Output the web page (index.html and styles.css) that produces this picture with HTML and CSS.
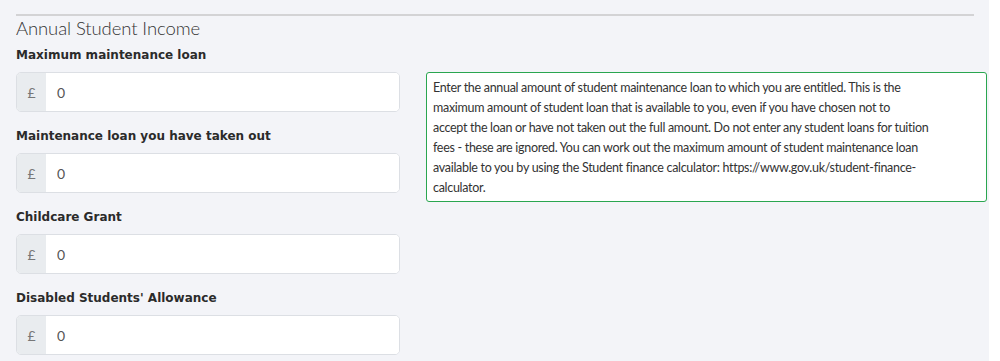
FILE: index.html
```html
<!DOCTYPE html>
<html lang="en">
<head>
    <meta charset="UTF-8">
    <meta name="viewport" content="width=device-width, initial-scale=1.0">
    <title>Annual Student Income</title>
    <link rel="stylesheet" href="styles.css">
</head>
<body>
    <div class="panel">
        <hr class="divider">
        <h3>Annual Student Income</h3>

        <div class="row">
            <div class="fields">
                <div class="field">
                    <label for="maxLoan">Maximum maintenance loan</label>
                    <div class="input-group">
                        <span class="prefix">£</span>
                        <input type="text" id="maxLoan" value="0">
                    </div>
                </div>
                <div class="field">
                    <label for="takenLoan">Maintenance loan you have taken out</label>
                    <div class="input-group">
                        <span class="prefix">£</span>
                        <input type="text" id="takenLoan" value="0">
                    </div>
                </div>
                <div class="field">
                    <label for="childcare">Childcare Grant</label>
                    <div class="input-group">
                        <span class="prefix">£</span>
                        <input type="text" id="childcare" value="0">
                    </div>
                </div>
                <div class="field">
                    <label for="dsa">Disabled Students' Allowance</label>
                    <div class="input-group">
                        <span class="prefix">£</span>
                        <input type="text" id="dsa" value="0">
                    </div>
                </div>
            </div>

            <div class="help">
                <p>Enter the annual amount of student maintenance loan to which you are entitled. This is the maximum amount of student loan that is available to you, even if you have chosen not to<br>accept the loan or have not taken out the full amount. Do not enter any student loans for tuition fees - these are ignored. You can work out the maximum amount of student maintenance loan available to you by using the Student finance calculator: https://www.gov.uk/student-finance-calculator.</p>
            </div>
        </div>
    </div>
</body>
</html>
```

FILE: styles.css
```css
body {
    margin: 0;
    background: #fff;
    font-family: Lato, "Open Sans", sans-serif;
    color: #333;
}

.panel {
    width: 989px;
    height: 361px;
    box-sizing: border-box;
    padding: 14px 2px 0 16px;
    background-color: #f3f4f8;
}

.divider {
    margin: 0 13px 0 0;
    border: none;
    border-top: 2px solid #d3d3d5;
}

h3 {
    margin: 0 0 5px 0;
    font-size: 18.5px;
    font-weight: 300;
    line-height: 24px;
    letter-spacing: -0.1px;
    color: #333;
}

.row {
    display: flex;
    gap: 26px;
    align-items: flex-start;
}

.fields {
    width: 384px;
}

.field {
    margin-bottom: 14px;
}

.field label {
    display: block;
    margin-bottom: 7px;
    font-family: "DejaVu Sans", sans-serif;
    font-size: 12px;
    font-weight: bold;
    line-height: 20px;
    color: #2b2b2b;
}

.input-group {
    display: flex;
    height: 40px;
    box-sizing: border-box;
    border: 1px solid #dcdfe4;
    border-radius: 5px;
    overflow: hidden;
    background: #fff;
}

.prefix {
    width: 29px;
    display: flex;
    align-items: center;
    justify-content: center;
    background-color: #e9ecef;
    color: #777;
    font-size: 14px;
}

.input-group input {
    flex: 1;
    border: none;
    padding: 0 0 0 11px;
    font-family: Lato, "Open Sans", sans-serif;
    font-size: 14px;
    color: #555;
    outline: none;
}

.help {
    width: 561px;
    margin-top: 27px;
    box-sizing: border-box;
    padding: 5px 50px 3px 6px;
    border: 1.5px solid #2aa650;
    border-radius: 3px;
    background: #fff;
}

.help p {
    margin: 0;
    font-size: 12.5px;
    line-height: 20px;
    letter-spacing: -0.3px;
    color: #333;
}
```
